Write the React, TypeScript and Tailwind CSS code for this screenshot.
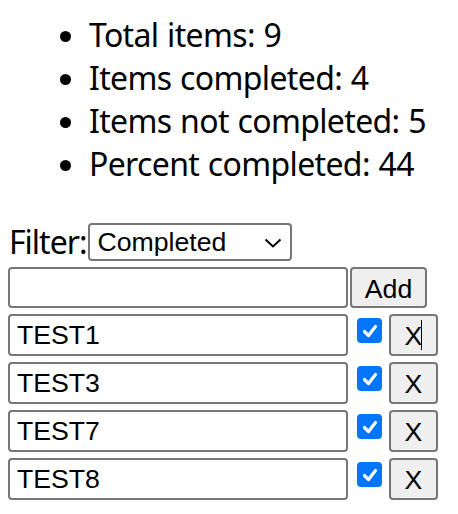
import { useState } from 'react';

const items = ['TEST1', 'TEST3', 'TEST7', 'TEST8'];

const stats = [
  'Total items: 9',
  'Items completed: 4',
  'Items not completed: 5',
  'Percent completed: 44',
];

function CheckMark() {
  return (
    <div className="mt-[4px] ml-[9px] flex h-[25px] w-[25px] shrink-0 items-center justify-center rounded-[4px] bg-[#0075ff]">
      <svg width="18" height="18" viewBox="0 0 18 18" fill="none">
        <path d="M3.5 9.5l4 4 7-9" stroke="white" strokeWidth="3.2" strokeLinecap="round" strokeLinejoin="round" />
      </svg>
    </div>
  );
}

export default function App() {
  const [filter, setFilter] = useState('completed');
  const [text, setText] = useState('');

  return (
    <div className="h-[514px] w-[458px] bg-white text-black font-['Noto_Sans',sans-serif]">
      <ul className="list-disc pt-[13px] pl-[89px] text-[32px] leading-[43px] tracking-[-0.65px] [word-spacing:1px]">
        {stats.map((s) => (
          <li key={s}>{s}</li>
        ))}
      </ul>

      <div className="mt-[38px] flex items-center pl-[9px]">
        <span className="text-[32px] leading-[38px] tracking-[-1px]">Filter:</span>
        <div className="relative ml-[1px]">
          <select
            value={filter}
            onChange={(e) => setFilter(e.target.value)}
            className="h-[38px] w-[204px] appearance-none rounded-[4px] border-2 border-[#767676] bg-white pl-[8px] font-['Liberation_Sans',Arial,sans-serif] text-[26.67px] leading-[34px]"
          >
            <option value="all">All</option>
            <option value="completed">Completed</option>
            <option value="active">Not completed</option>
          </select>
          <svg className="pointer-events-none absolute left-[176px] top-[15px]" width="18" height="10" viewBox="0 0 18 10" fill="none">
            <path d="M1.5 1.5l7.5 7 7.5-7" stroke="black" strokeWidth="2" />
          </svg>
        </div>
      </div>

      <div className="mt-[6px] flex pl-[8px]">
        <input
          value={text}
          onChange={(e) => setText(e.target.value)}
          className="h-[41px] w-[340px] rounded-[4px] border-2 border-[#767676] bg-white px-[7px] font-['Liberation_Sans',Arial,sans-serif] text-[26.67px] outline-none"
        />
        <button className="ml-[2px] h-[41px] w-[77px] rounded-[4px] border-2 border-[#767676] bg-[#efefef] font-['Liberation_Sans',Arial,sans-serif] text-[26.67px]">
          Add
        </button>
      </div>

      <div className="mt-[6px] flex flex-col gap-[6px] pl-[8px]">
        {items.map((name, i) => (
          <div key={name} className="flex">
            <input
              defaultValue={name}
              className="h-[42px] w-[340px] rounded-[4px] border-2 border-[#767676] bg-white px-[7px] font-['Liberation_Sans',Arial,sans-serif] text-[26.67px] outline-none"
            />
            <CheckMark />
            <button className="relative ml-[7px] h-[42px] w-[49px] rounded-[4px] border-2 border-[#767676] bg-[#efefef] font-['Liberation_Sans',Arial,sans-serif] text-[26.67px]">
              X
              {i === 0 && <span className="absolute left-[30px] top-[4px] h-[30px] w-px bg-black" />}
            </button>
          </div>
        ))}
      </div>
    </div>
  );
}
